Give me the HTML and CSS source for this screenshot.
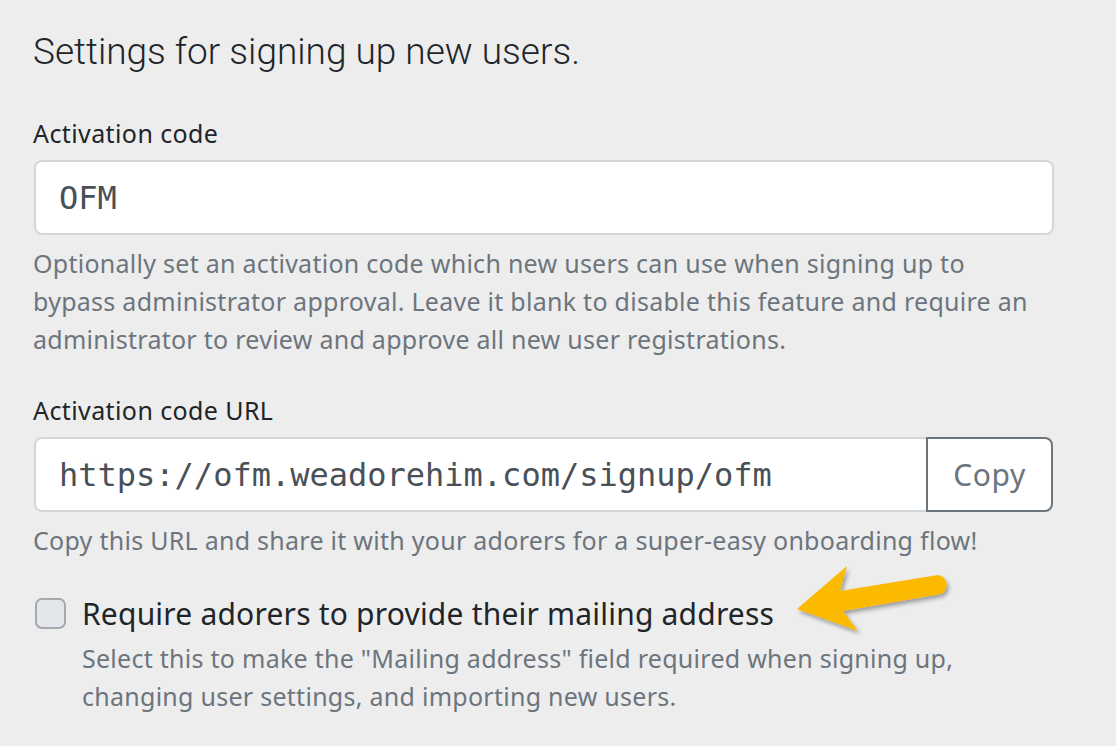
FILE: index.html
```html
<!DOCTYPE html>
<html lang="en">
<head>
    <meta charset="UTF-8">
    <title>Signup Settings</title>
    <link rel="stylesheet" href="styles.css">
</head>
<body>

<div class="container">
    <h2>Settings for signing up new users.</h2>

    <div class="group">
        <label for="activationCode">Activation code</label>
        <input type="text" id="activationCode" class="code" value="OFM">
        <p class="help">Optionally set an activation code which new users can use when signing up to bypass administrator approval. Leave it blank to disable this feature and require an administrator to review and approve all new user registrations.</p>
    </div>

    <div class="group">
        <label for="activationUrl">Activation code URL</label>
        <div class="input-group">
            <input type="text" id="activationUrl" class="code" value="https://ofm.weadorehim.com/signup/ofm" readonly>
            <button type="button">Copy</button>
        </div>
        <p class="help">Copy this URL and share it with your adorers for a super-easy onboarding flow!</p>
    </div>

    <div class="check">
        <input type="checkbox" id="requireAddress">
        <div>
            <label for="requireAddress" class="check-label">Require adorers to provide their mailing address</label>
            <p class="help">Select this to make the "Mailing address" field required when signing up, changing user settings, and importing new users.</p>
        </div>
        <!-- callout arrow -->
        <svg class="arrow" width="175" height="85" viewBox="0 0 175 85">
            <defs>
                <filter id="shadow" x="-20%" y="-20%" width="140%" height="160%">
                    <feDropShadow dx="2" dy="3" stdDeviation="2" flood-color="#000" flood-opacity="0.35"/>
                </filter>
            </defs>
            <path filter="url(#shadow)" d="M7 50 L57 7 L50 32 L148 16 A10 10 0 0 1 151 35 L53 52 L68 72 Z" fill="#fbb900"/>
        </svg>
    </div>
</div>

</body>
</html>
```
FILE: styles.css
```css
body {
    margin: 0;
    background-color: #ededed;
    font-family: "Noto Sans", "Liberation Sans", sans-serif;
    color: #212529;
}
.container {
    width: 1020px;
    padding: 27px 0 0 33px;
}
h2 {
    font-family: Roboto, sans-serif;
    font-weight: 300;
    font-size: 37px;
    margin: 0 0 41px;
    line-height: 50px;
}
.group {
    margin-bottom: 37px;
}
label {
    display: block;
    font-size: 25px;
    letter-spacing: 0.4px;
    line-height: 30px;
    margin-bottom: 12px;
}
input.code {
    display: block;
    width: 100%;
    box-sizing: border-box;
    height: 75px;
    padding: 0 23px;
    font-family: "DejaVu Sans Mono", monospace;
    font-size: 32px;
    color: #495057;
    background: white;
    border: 2px solid #d3d7dc;
    border-radius: 8px;
    margin-left: 1px;
}
.help {
    margin: 9px 0 0;
    font-size: 25px;
    letter-spacing: 0.27px;
    line-height: 38px;
    color: #6c757d;
}
.input-group {
    display: flex;
}
.input-group input.code {
    flex: 1;
    border-radius: 8px 0 0 8px;
    border-right: none;
}
.input-group button {
    width: 127px;
    height: 75px;
    font-family: "Noto Sans", "Liberation Sans", sans-serif;
    font-size: 30px;
    letter-spacing: 0.6px;
    color: #6c757d;
    background: white;
    border: 2px solid #6c757d;
    border-radius: 0 8px 8px 0;
}
.check {
    position: relative;
    display: flex;
    gap: 16px;
    margin-top: -2px;
}
.check input {
    appearance: none;
    width: 31px;
    height: 31px;
    margin: 4px 0 0 2px;
    flex-shrink: 0;
    background: #e3e6ea;
    border: 2px solid #a5a9ad;
    border-radius: 7px;
}
.check-label {
    font-size: 30px;
    letter-spacing: 0.2px;
    line-height: 40px;
    margin: 0;
}
.check .help {
    margin-top: 5px;
}
.arrow {
    position: absolute;
    left: 757px;
    top: -35px;
}
```
